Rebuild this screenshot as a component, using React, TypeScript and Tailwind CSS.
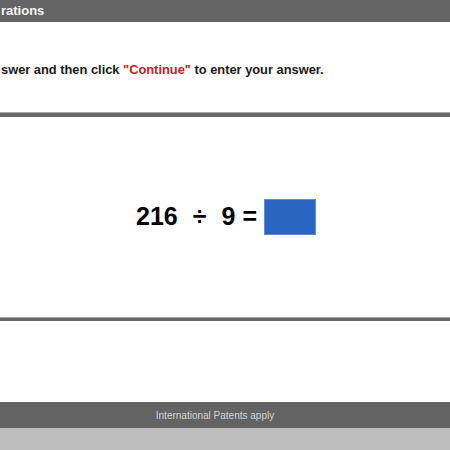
export default function App() {
  return (
    <div className="flex h-[450px] w-[450px] flex-col overflow-hidden bg-white font-['Liberation_Sans',Arial,sans-serif]">
      <div className="flex h-[22px] items-center bg-[#646464] pl-px text-[13px] font-bold text-[#f4f4f4]">
        rations
      </div>
      <div className="flex h-[90px] items-center pt-[6px] text-[12.85px] font-bold text-[#1a1a1a]">
        <p className="pl-px">
          swer and then click <span className="text-[#c8201d]">"Continue"</span> to enter your answer.
        </p>
      </div>
      <div className="h-[5px] border-t border-[#a8a8a8] bg-[#666666]" />
      <div className="flex h-[200px] items-center justify-center pl-[2px]">
        <div className="flex items-center text-[25px] font-bold text-black">
          <span>216</span>
          <span className="ml-[15px]">÷</span>
          <span className="ml-[15px]">9</span>
          <span className="ml-[7px]">=</span>
          <div className="ml-[7px] h-[36px] w-[52px] border border-[#5b8ed6] bg-[#2866c2]" />
        </div>
      </div>
      <div className="h-[4px] border-t border-[#a8a8a8] bg-[#666666]" />
      <div className="h-[81px]" />
      <div className="flex h-[26px] items-center justify-center bg-[#636363] pr-[20px] text-[10px] text-[#d4d4d4]">
        International Patents apply
      </div>
      <div className="flex-1 bg-[#bdbdbd]" />
    </div>
  );
}
